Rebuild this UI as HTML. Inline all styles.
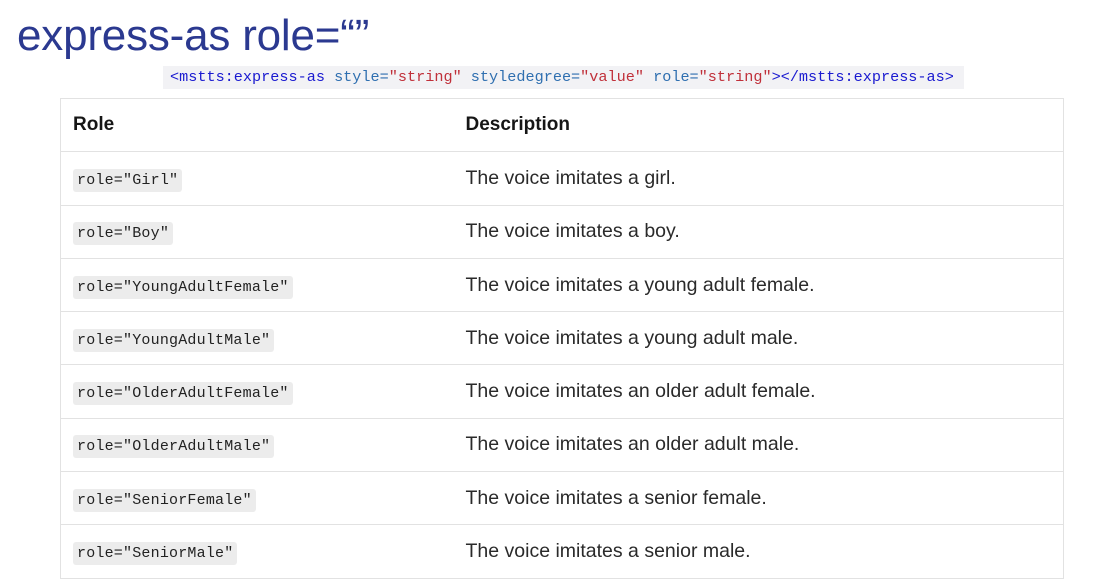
<!DOCTYPE html>
<html><head><meta charset="utf-8"><style>
*{margin:0;padding:0;box-sizing:border-box}
body{width:1110px;height:585px;background:#fff;position:relative;overflow:hidden;font-family:"Liberation Sans",sans-serif}
.title{position:absolute;left:17px;top:11px;font-size:44px;color:#2b3990;letter-spacing:-0.2px;line-height:50px}
.code{position:absolute;left:163px;top:66px;width:801px;height:23px;background:#f2f2f5;font-family:"Liberation Mono",monospace;font-size:15.2px;line-height:23px;padding-left:7px;white-space:pre;color:#2f6fb0}
.b{color:#1a1ad0}.r{color:#c0303a}
table{position:absolute;left:60px;top:98px;width:1004px;border-collapse:collapse;border:1px solid #e2e2e2}
td,th{height:53.3px;border-top:1px solid #e2e2e2;text-align:left;vertical-align:middle;font-size:19.5px;color:#2a2a2a}
th{font-weight:bold;color:#161616;font-size:19px}
td:first-child,th:first-child{padding-left:12px;width:405px}
tr:first-child th{border-top:none}
code{font-family:"Liberation Mono",monospace;font-size:15px;letter-spacing:0.2px;background:#ececec;border-radius:3px;padding:3px 4px;color:#222}
</style></head><body>
<div class="title">express-as role=“”</div>
<div class="code"><span class="b">&lt;mstts:express-as</span> style=<span class="r">"string"</span> styledegree=<span class="r">"value"</span> role=<span class="r">"string"</span><span class="b">&gt;&lt;/mstts:express-as&gt;</span></div>
<table>
<tr><th>Role</th><th>Description</th></tr>
<tr><td><code>role="Girl"</code></td><td>The voice imitates a girl.</td></tr>
<tr><td><code>role="Boy"</code></td><td>The voice imitates a boy.</td></tr>
<tr><td><code>role="YoungAdultFemale"</code></td><td>The voice imitates a young adult female.</td></tr>
<tr><td><code>role="YoungAdultMale"</code></td><td>The voice imitates a young adult male.</td></tr>
<tr><td><code>role="OlderAdultFemale"</code></td><td>The voice imitates an older adult female.</td></tr>
<tr><td><code>role="OlderAdultMale"</code></td><td>The voice imitates an older adult male.</td></tr>
<tr><td><code>role="SeniorFemale"</code></td><td>The voice imitates a senior female.</td></tr>
<tr><td><code>role="SeniorMale"</code></td><td>The voice imitates a senior male.</td></tr>
</table>
</body></html>
